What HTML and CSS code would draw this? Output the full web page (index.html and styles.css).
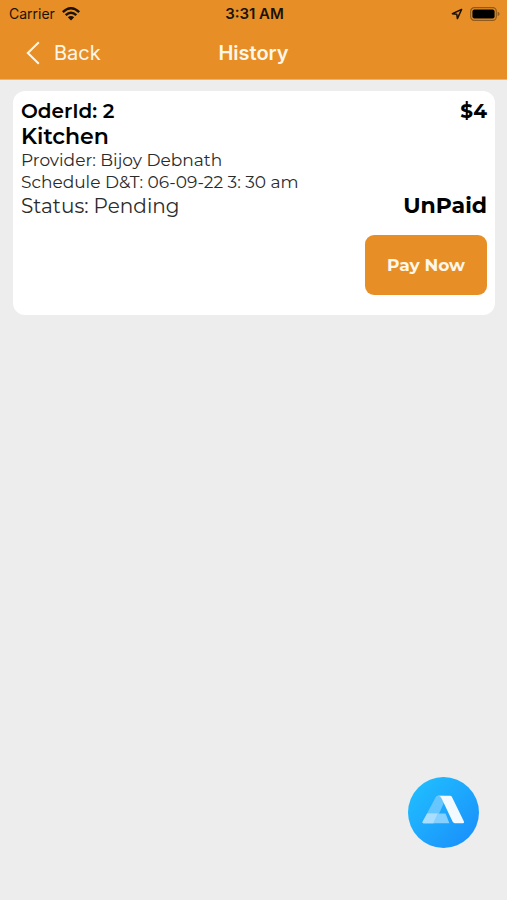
FILE: index.html
```html
<!DOCTYPE html>
<html lang="en">
<head>
<meta charset="utf-8">
<meta name="viewport" content="width=device-width, initial-scale=1">
<title>History</title>
<link rel="stylesheet" href="styles.css">
</head>
<body>
<header class="header">
  <div class="status-bar">
    <div class="carrier">
      <span>Carrier</span>
      <svg width="18" height="14" viewBox="0 0 18 14" fill="none" stroke="currentColor" stroke-width="2.5" aria-hidden="true">
        <path d="M.8 5.1Q9-2.5 17.2 5.1"/>
        <path d="M3.7 8.2Q9 3.3 14.3 8.2"/>
        <path d="M9 13.6 5.8 10.3Q9 7.7 12.2 10.3Z" fill="currentColor" stroke="none"/>
      </svg>
    </div>
    <time class="clock">3:31 AM</time>
    <div class="indicators">
      <svg width="12" height="12" viewBox="0 0 12 12" fill="none" stroke="currentColor" stroke-width="1.5" stroke-linejoin="round" aria-hidden="true">
        <path d="M10.6 1.4 1.4 5.8 5.8 6.3 6.4 10.6Z"/>
      </svg>
      <svg width="30" height="14" viewBox="0 0 30 14" aria-hidden="true">
        <rect x=".7" y=".7" width="25.6" height="12.6" rx="3.6" fill="none" stroke="#8f5a1b" stroke-width="1.2"/>
        <rect x="2.4" y="2.4" width="22.2" height="9.2" rx="2"/>
        <path d="M27.6 4.8Q29.6 5.4 29.6 7T27.6 9.2Z" fill="#8f5a1b"/>
      </svg>
    </div>
  </div>
  <nav class="nav-bar">
    <button class="back" type="button">
      <svg width="14" height="24" viewBox="0 0 14 24" fill="none" stroke="currentColor" stroke-width="2" aria-hidden="true">
        <path d="M12.8 1.2 1.8 12 12.8 22.8"/>
      </svg>
      <span>Back</span>
    </button>
    <h1 class="title">History</h1>
  </nav>
</header>
<main class="orders">
  <article class="card">
    <div class="row order">
      <span>OderId: 2</span>
      <span class="price">$4</span>
    </div>
    <h2 class="service">Kitchen</h2>
    <p class="detail">Provider: Bijoy Debnath</p>
    <p class="detail">Schedule D&amp;T: 06-09-22 3: 30 am</p>
    <div class="row status">
      <span>Status: Pending</span>
      <strong class="payment">UnPaid</strong>
    </div>
    <button class="pay" type="button">Pay Now</button>
  </article>
</main>
<button class="fab" type="button" aria-label="Assistant">
  <svg viewBox="0 0 72 72" aria-hidden="true">
    <defs>
      <linearGradient id="disc" x1="0" y1="0" x2="1" y2="1">
        <stop offset=".1" stop-color="#20bdff"/>
        <stop offset=".9" stop-color="#1a91fb"/>
      </linearGradient>
    </defs>
    <circle cx="36" cy="36" r="36" fill="url(#disc)"/>
    <path d="M30 19H37L36 27 27 47H17Q14 47 15 45L28 20.5Q28.7 19 30 19Z" fill="#68c6ff"/>
    <path d="M19.5 37H38L42 47H17Q14 47 15 45Z" fill="#86d0ff"/>
    <path d="M19.5 37H30L25.5 47H17Q14 47 15 45Z" fill="#a9deff"/>
    <path d="M30 19H42.5Q44 19 44.7 20.5L56.7 45Q57.4 47 55.5 47H47.5Q46 47 45.3 45.5L34 21.5Q33 19 30 19Z" fill="#f2faff"/>
  </svg>
</button>
</body>
</html>
```
FILE: styles.css
```css
* {
  box-sizing: border-box;
}

body {
  margin: 0;
  min-height: 100vh;
  background: #ededed;
  color: #000;
  font-family: Montserrat, Inter, "Liberation Sans", sans-serif;
}

button {
  border: 0;
  padding: 0;
  font: inherit;
  cursor: pointer;
}

h1,
h2,
p {
  margin: 0;
}

svg {
  display: block;
}

.header {
  background: #e78f26;
  border-bottom: 1px solid #d9b78c;
  font-family: Inter, "Liberation Sans", sans-serif;
}

.status-bar {
  display: grid;
  grid-template-columns: 1fr auto 1fr;
  align-items: center;
  height: 27px;
  padding: 0 7px 0 9px;
  color: #1c1206;
  font-size: 14px;
}

.carrier,
.indicators {
  display: flex;
  align-items: center;
  gap: 7px;
}

.indicators {
  justify-content: flex-end;
}

.clock {
  font-size: 15px;
  font-weight: 600;
}

.nav-bar {
  display: grid;
  grid-template-columns: 1fr auto 1fr;
  align-items: center;
  height: 52px;
  padding: 0 26px;
  color: #fff7ea;
  font-size: 20px;
}

.back {
  display: flex;
  align-items: center;
  justify-self: start;
  gap: 14px;
  background: none;
  color: inherit;
}

.title {
  font-size: 20px;
  font-weight: 600;
}

.orders {
  padding: 11px 12px 11px 13px;
}

.card {
  display: flex;
  flex-direction: column;
  padding: 8px 8px 20px;
  border-radius: 12px;
  background: #fff;
}

.row {
  display: flex;
  align-items: center;
  justify-content: space-between;
}

.order {
  font-size: 20px;
  font-weight: 600;
  line-height: 25px;
}

.price,
.payment {
  font-weight: 700;
}

.service {
  font-size: 22px;
  font-weight: 600;
  line-height: 25px;
}

.detail {
  color: #2b2b2b;
  font-size: 17px;
  line-height: 22px;
}

.status {
  color: #2b2b2b;
  font-size: 20px;
  line-height: 26px;
}

.payment {
  color: #000;
  font-size: 22px;
}

.pay {
  align-self: flex-end;
  min-width: 122px;
  height: 60px;
  margin-top: 16px;
  padding: 0 20px;
  border-radius: 9px;
  background: #e78f26;
  color: #fff7ea;
  font-size: 17px;
  font-weight: 700;
}

.fab {
  position: fixed;
  right: 28px;
  bottom: 52px;
  width: 71px;
  height: 71px;
  border-radius: 50%;
  background: none;
}
```
